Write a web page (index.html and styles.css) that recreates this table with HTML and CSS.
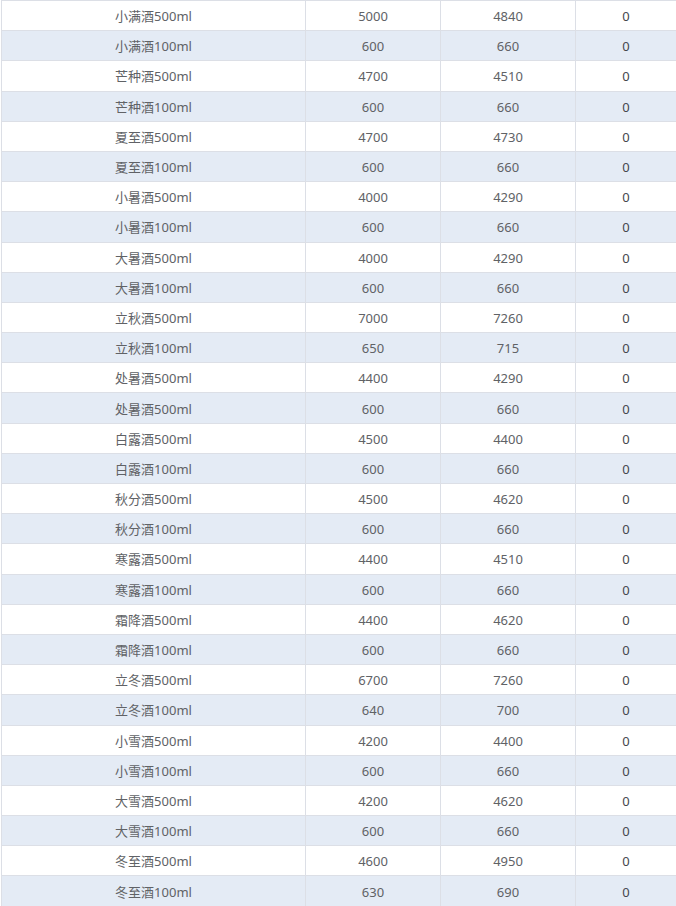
FILE: index.html
```html
<!DOCTYPE html>
<html lang="zh-CN">
<head>
<meta charset="utf-8">
<title>表格</title>
<link rel="stylesheet" href="styles.css">
</head>
<body>
<div class="table">
  <div class="row"><div class="cell">小满酒500ml</div><div class="cell">5000</div><div class="cell">4840</div><div class="cell last">0</div></div>
  <div class="row"><div class="cell">小满酒100ml</div><div class="cell">600</div><div class="cell">660</div><div class="cell last">0</div></div>
  <div class="row"><div class="cell">芒种酒500ml</div><div class="cell">4700</div><div class="cell">4510</div><div class="cell last">0</div></div>
  <div class="row"><div class="cell">芒种酒100ml</div><div class="cell">600</div><div class="cell">660</div><div class="cell last">0</div></div>
  <div class="row"><div class="cell">夏至酒500ml</div><div class="cell">4700</div><div class="cell">4730</div><div class="cell last">0</div></div>
  <div class="row"><div class="cell">夏至酒100ml</div><div class="cell">600</div><div class="cell">660</div><div class="cell last">0</div></div>
  <div class="row"><div class="cell">小暑酒500ml</div><div class="cell">4000</div><div class="cell">4290</div><div class="cell last">0</div></div>
  <div class="row"><div class="cell">小暑酒100ml</div><div class="cell">600</div><div class="cell">660</div><div class="cell last">0</div></div>
  <div class="row"><div class="cell">大暑酒500ml</div><div class="cell">4000</div><div class="cell">4290</div><div class="cell last">0</div></div>
  <div class="row"><div class="cell">大暑酒100ml</div><div class="cell">600</div><div class="cell">660</div><div class="cell last">0</div></div>
  <div class="row"><div class="cell">立秋酒500ml</div><div class="cell">7000</div><div class="cell">7260</div><div class="cell last">0</div></div>
  <div class="row"><div class="cell">立秋酒100ml</div><div class="cell">650</div><div class="cell">715</div><div class="cell last">0</div></div>
  <div class="row"><div class="cell">处暑酒500ml</div><div class="cell">4400</div><div class="cell">4290</div><div class="cell last">0</div></div>
  <div class="row"><div class="cell">处暑酒500ml</div><div class="cell">600</div><div class="cell">660</div><div class="cell last">0</div></div>
  <div class="row"><div class="cell">白露酒500ml</div><div class="cell">4500</div><div class="cell">4400</div><div class="cell last">0</div></div>
  <div class="row"><div class="cell">白露酒100ml</div><div class="cell">600</div><div class="cell">660</div><div class="cell last">0</div></div>
  <div class="row"><div class="cell">秋分酒500ml</div><div class="cell">4500</div><div class="cell">4620</div><div class="cell last">0</div></div>
  <div class="row"><div class="cell">秋分酒100ml</div><div class="cell">600</div><div class="cell">660</div><div class="cell last">0</div></div>
  <div class="row"><div class="cell">寒露酒500ml</div><div class="cell">4400</div><div class="cell">4510</div><div class="cell last">0</div></div>
  <div class="row"><div class="cell">寒露酒100ml</div><div class="cell">600</div><div class="cell">660</div><div class="cell last">0</div></div>
  <div class="row"><div class="cell">霜降酒500ml</div><div class="cell">4400</div><div class="cell">4620</div><div class="cell last">0</div></div>
  <div class="row"><div class="cell">霜降酒100ml</div><div class="cell">600</div><div class="cell">660</div><div class="cell last">0</div></div>
  <div class="row"><div class="cell">立冬酒500ml</div><div class="cell">6700</div><div class="cell">7260</div><div class="cell last">0</div></div>
  <div class="row"><div class="cell">立冬酒100ml</div><div class="cell">640</div><div class="cell">700</div><div class="cell last">0</div></div>
  <div class="row"><div class="cell">小雪酒500ml</div><div class="cell">4200</div><div class="cell">4400</div><div class="cell last">0</div></div>
  <div class="row"><div class="cell">小雪酒100ml</div><div class="cell">600</div><div class="cell">660</div><div class="cell last">0</div></div>
  <div class="row"><div class="cell">大雪酒500ml</div><div class="cell">4200</div><div class="cell">4620</div><div class="cell last">0</div></div>
  <div class="row"><div class="cell">大雪酒100ml</div><div class="cell">600</div><div class="cell">660</div><div class="cell last">0</div></div>
  <div class="row"><div class="cell">冬至酒500ml</div><div class="cell">4600</div><div class="cell">4950</div><div class="cell last">0</div></div>
  <div class="row"><div class="cell">冬至酒100ml</div><div class="cell">630</div><div class="cell">690</div><div class="cell last">0</div></div>
</div>
</body>
</html>
```
FILE: styles.css
```css
html, body {
  margin: 0;
  padding: 0;
  background: #ffffff;
  overflow: hidden;
}

.table {
  margin-left: 1px;
  border-top: 1px solid #dcdfe6;
  border-left: 1px solid #dcdfe6;
  font-family: "Noto Sans", "Noto Sans CJK SC", sans-serif;
  font-size: 13px;
  color: #606266;
}

.row {
  display: grid;
  grid-template-columns: 304px 135px 135px 1fr;
  height: 30.2px;
  box-sizing: border-box;
  border-bottom: 1px solid #dcdfe6;
  background: #ffffff;
}

.row:nth-child(even) {
  background: #e4ebf5;
}

.cell {
  display: flex;
  align-items: center;
  justify-content: center;
  padding-top: 2px;
  box-sizing: border-box;
  border-right: 1px solid #dcdfe6;
  line-height: 1;
  white-space: nowrap;
}

.cell.last {
  border-right: none;
  color: #45474d;
}
```
